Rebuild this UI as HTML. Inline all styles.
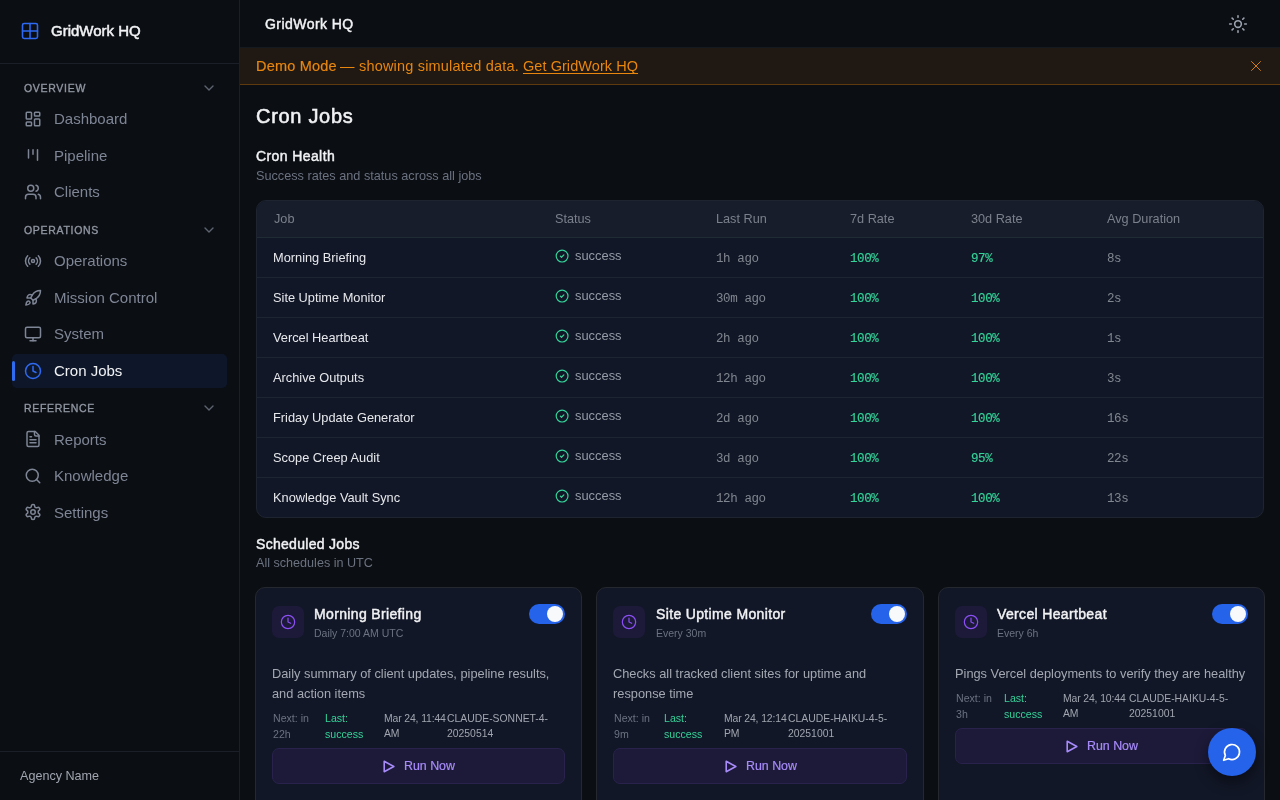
<!DOCTYPE html>
<html><head><meta charset="utf-8">
<style>
*{box-sizing:border-box;margin:0;padding:0}
html,body{width:1280px;height:800px;overflow:hidden;background:#0b0e13;font-family:"Liberation Sans",sans-serif}
.b{position:absolute}
.t{position:absolute;line-height:1;white-space:nowrap;will-change:transform}
</style></head><body>
<div class="b" style="left:239px;top:0;width:1px;height:800px;background:#1b1f27"></div>
<div class="b" style="left:0;top:63px;width:239px;height:1px;background:#1b1f27"></div>
<div class="b" style="left:0;top:751px;width:239px;height:1px;background:#1b1f27"></div>
<svg class="b" style="left:20px;top:21px" width="20" height="20" viewBox="0 0 24 24" fill="none" stroke="#2d69f2" stroke-width="1.9" stroke-linecap="round" stroke-linejoin="round"><rect x="3" y="3" width="18" height="18" rx="2"/><path d="M12 3v18"/><path d="M3 12h18"/></svg>
<div class="t" style="left:50.50px;top:22.90px;font-size:15px;color:#f1f2f4;letter-spacing:0.0px;-webkit-text-stroke:0.5px #f1f2f4;">GridWork HQ</div>
<div class="t" style="left:24.20px;top:82.51px;font-size:10.5px;color:#9096a1;letter-spacing:0.7px;-webkit-text-stroke:0.35px #9096a1;">OVERVIEW</div>
<svg class="b" style="left:204px;top:84.7px" width="10" height="6" viewBox="0 0 10 6" fill="none" stroke="#5d6370" stroke-width="1.4" stroke-linecap="round" stroke-linejoin="round"><path d="M1 1l4 4 4-4"/></svg>
<div class="t" style="left:24.20px;top:224.81px;font-size:10.5px;color:#9096a1;letter-spacing:0.7px;-webkit-text-stroke:0.35px #9096a1;">OPERATIONS</div>
<svg class="b" style="left:204px;top:227px" width="10" height="6" viewBox="0 0 10 6" fill="none" stroke="#5d6370" stroke-width="1.4" stroke-linecap="round" stroke-linejoin="round"><path d="M1 1l4 4 4-4"/></svg>
<div class="t" style="left:24.20px;top:402.81px;font-size:10.5px;color:#9096a1;letter-spacing:0.7px;-webkit-text-stroke:0.35px #9096a1;">REFERENCE</div>
<svg class="b" style="left:204px;top:405px" width="10" height="6" viewBox="0 0 10 6" fill="none" stroke="#5d6370" stroke-width="1.4" stroke-linecap="round" stroke-linejoin="round"><path d="M1 1l4 4 4-4"/></svg>
<svg class="b" style="left:24px;top:109.8px" width="18" height="18" viewBox="0 0 24 24" fill="none" stroke="#7e8595" stroke-width="2" stroke-linecap="round" stroke-linejoin="round"><rect x="3" y="3" width="7" height="9" rx="1"/><rect x="14" y="3" width="7" height="5" rx="1"/><rect x="14" y="12" width="7" height="9" rx="1"/><rect x="3" y="16" width="7" height="5" rx="1"/></svg>
<div class="t" style="left:54.40px;top:111.40px;font-size:15px;color:#7e8595;">Dashboard</div>
<svg class="b" style="left:24px;top:146.3px" width="18" height="18" viewBox="0 0 24 24" fill="none" stroke="#7e8595" stroke-width="2" stroke-linecap="round" stroke-linejoin="round"><path d="M6 5v11"/><path d="M12 5v6"/><path d="M18 5v14"/></svg>
<div class="t" style="left:54.40px;top:147.90px;font-size:15px;color:#7e8595;">Pipeline</div>
<svg class="b" style="left:24px;top:182.8px" width="18" height="18" viewBox="0 0 24 24" fill="none" stroke="#7e8595" stroke-width="2" stroke-linecap="round" stroke-linejoin="round"><path d="M16 21v-2a4 4 0 0 0-4-4H6a4 4 0 0 0-4 4v2"/><circle cx="9" cy="7" r="4"/><path d="M22 21v-2a4 4 0 0 0-3-3.87"/><path d="M16 3.13a4 4 0 0 1 0 7.75"/></svg>
<div class="t" style="left:54.40px;top:184.40px;font-size:15px;color:#7e8595;">Clients</div>
<svg class="b" style="left:24px;top:251.7px" width="18" height="18" viewBox="0 0 24 24" fill="none" stroke="#7e8595" stroke-width="2" stroke-linecap="round" stroke-linejoin="round"><path d="M4.9 19.1C1 15.2 1 8.8 4.9 4.9"/><path d="M7.8 16.2c-2.3-2.3-2.3-6.1 0-8.5"/><circle cx="12" cy="12" r="2"/><path d="M16.2 7.8c2.3 2.3 2.3 6.1 0 8.5"/><path d="M19.1 4.9C23 8.8 23 15.1 19.1 19"/></svg>
<div class="t" style="left:54.40px;top:253.30px;font-size:15px;color:#7e8595;">Operations</div>
<svg class="b" style="left:24px;top:288.8px" width="18" height="18" viewBox="0 0 24 24" fill="none" stroke="#7e8595" stroke-width="2" stroke-linecap="round" stroke-linejoin="round"><path d="M4.5 16.5c-1.5 1.26-2 5-2 5s3.74-.5 5-2c.71-.84.7-2.13-.09-2.91a2.18 2.18 0 0 0-2.91-.09z"/><path d="m12 15-3-3a22 22 0 0 1 2-3.95A12.88 12.88 0 0 1 22 2c0 2.72-.78 7.5-6 11a22.35 22.35 0 0 1-4 2z"/><path d="M9 12H4s.55-3.03 2-4c1.62-1.08 5 0 5 0"/><path d="M12 15v5s3.03-.55 4-2c1.08-1.62 0-5 0-5"/></svg>
<div class="t" style="left:54.40px;top:290.40px;font-size:15px;color:#7e8595;">Mission Control</div>
<svg class="b" style="left:24px;top:324.7px" width="18" height="18" viewBox="0 0 24 24" fill="none" stroke="#7e8595" stroke-width="2" stroke-linecap="round" stroke-linejoin="round"><rect x="2" y="3" width="20" height="14" rx="2"/><line x1="8" y1="21" x2="16" y2="21"/><line x1="12" y1="17" x2="12" y2="21"/></svg>
<div class="t" style="left:54.40px;top:326.30px;font-size:15px;color:#7e8595;">System</div>
<div class="b" style="left:12px;top:354px;width:215px;height:33.8px;border-radius:5px;background:#0e172a"></div>
<div class="b" style="left:12px;top:361px;width:3px;height:20px;background:#2f6bf0;border-radius:1.5px"></div>
<svg class="b" style="left:24px;top:361.8px" width="18" height="18" viewBox="0 0 24 24" fill="none" stroke="#2f69f0" stroke-width="2" stroke-linecap="round" stroke-linejoin="round"><circle cx="12" cy="12" r="10"/><polyline points="12 6 12 12 16 14"/></svg>
<div class="t" style="left:54.40px;top:363.40px;font-size:15px;color:#f1f2f4;">Cron Jobs</div>
<svg class="b" style="left:24px;top:430.2px" width="18" height="18" viewBox="0 0 24 24" fill="none" stroke="#7e8595" stroke-width="2" stroke-linecap="round" stroke-linejoin="round"><path d="M15 2H6a2 2 0 0 0-2 2v16a2 2 0 0 0 2 2h12a2 2 0 0 0 2-2V7Z"/><path d="M14 2v4a2 2 0 0 0 2 2h4"/><path d="M10 9H8"/><path d="M16 13H8"/><path d="M16 17H8"/></svg>
<div class="t" style="left:54.40px;top:431.80px;font-size:15px;color:#7e8595;">Reports</div>
<svg class="b" style="left:24px;top:466.5px" width="18" height="18" viewBox="0 0 24 24" fill="none" stroke="#7e8595" stroke-width="2" stroke-linecap="round" stroke-linejoin="round"><circle cx="11" cy="11" r="8"/><path d="m21 21-4.3-4.3"/></svg>
<div class="t" style="left:54.40px;top:468.10px;font-size:15px;color:#7e8595;">Knowledge</div>
<svg class="b" style="left:24px;top:503.3px" width="18" height="18" viewBox="0 0 24 24" fill="none" stroke="#7e8595" stroke-width="2" stroke-linecap="round" stroke-linejoin="round"><path d="M12.22 2h-.44a2 2 0 0 0-2 2v.18a2 2 0 0 1-1 1.73l-.43.25a2 2 0 0 1-2 0l-.15-.08a2 2 0 0 0-2.73.73l-.22.38a2 2 0 0 0 .73 2.73l.15.1a2 2 0 0 1 1 1.72v.51a2 2 0 0 1-1 1.74l-.15.09a2 2 0 0 0-.73 2.73l.22.38a2 2 0 0 0 2.73.73l.15-.08a2 2 0 0 1 2 0l.43.25a2 2 0 0 1 1 1.73V20a2 2 0 0 0 2 2h.44a2 2 0 0 0 2-2v-.18a2 2 0 0 1 1-1.73l.43-.25a2 2 0 0 1 2 0l.15.08a2 2 0 0 0 2.73-.73l.22-.39a2 2 0 0 0-.73-2.73l-.15-.08a2 2 0 0 1-1-1.74v-.5a2 2 0 0 1 1-1.74l.15-.09a2 2 0 0 0 .73-2.73l-.22-.38a2 2 0 0 0-2.73-.73l-.15.08a2 2 0 0 1-2 0l-.43-.25a2 2 0 0 1-1-1.73V4a2 2 0 0 0-2-2z"/><circle cx="12" cy="12" r="3"/></svg>
<div class="t" style="left:54.40px;top:504.90px;font-size:15px;color:#7e8595;">Settings</div>
<div class="t" style="left:20.10px;top:769.93px;font-size:12.6px;color:#a0a5af;">Agency Name</div>
<div class="b" style="left:240px;top:47px;width:1040px;height:1px;background:#151920"></div>
<div class="t" style="left:264.60px;top:16.85px;font-size:14px;color:#f1f2f4;letter-spacing:0.45px;-webkit-text-stroke:0.45px #f1f2f4;">GridWork HQ</div>
<svg class="b" style="left:1228px;top:14px" width="20" height="20" viewBox="0 0 24 24" fill="none" stroke="#9ca3af" stroke-width="1.9" stroke-linecap="round"><circle cx="12" cy="12" r="4"/><path d="M12 2v2"/><path d="M12 20v2"/><path d="m4.93 4.93 1.41 1.41"/><path d="m17.66 17.66 1.41 1.41"/><path d="M2 12h2"/><path d="M20 12h2"/><path d="m6.34 17.66-1.41 1.41"/><path d="m19.07 4.93-1.41 1.41"/></svg>
<div class="b" style="left:240px;top:48px;width:1040px;height:36px;background:#1f1813"></div>
<div class="b" style="left:240px;top:84px;width:1040px;height:1px;background:#5e3a0e"></div>
<div class="t" style="left:255.60px;top:58.83px;font-size:14.5px;color:#e8860e;letter-spacing:0.2px;-webkit-text-stroke:0.2px #e8860e;">Demo Mode</div>
<div class="t" style="left:340.30px;top:58.83px;font-size:14.5px;color:#e8860e;letter-spacing:0px;">—</div>
<div class="t" style="left:359.20px;top:58.83px;font-size:14.5px;color:#e8860e;letter-spacing:0.19px;">showing simulated data.</div>
<div class="t" style="left:523.40px;top:58.83px;font-size:14.5px;color:#e8860e;letter-spacing:0.06px;text-decoration:underline;text-underline-offset:2px;text-decoration-skip-ink:none;">Get GridWork HQ</div>
<svg class="b" style="left:1251px;top:61px" width="10" height="10" viewBox="0 0 10 10" fill="none" stroke="#d27d10" stroke-width="1.0" stroke-linecap="round"><path d="M0.5 0.5l9 9M9.5 0.5l-9 9"/></svg>
<div class="t" style="left:256.30px;top:106.07px;font-size:20px;color:#f1f2f4;letter-spacing:0.7px;-webkit-text-stroke:0.55px #f1f2f4;">Cron Jobs</div>
<div class="t" style="left:256.30px;top:149.35px;font-size:14px;color:#f1f2f4;letter-spacing:0.4px;-webkit-text-stroke:0.45px #f1f2f4;">Cron Health</div>
<div class="t" style="left:256.30px;top:169.65px;font-size:12.7px;color:#6b7280;">Success rates and status across all jobs</div>
<div class="b" style="left:256px;top:200px;width:1008px;height:318px;border:1px solid #1e2430;border-radius:10px;background:#121727;overflow:hidden"><div class="b" style="left:0;top:0;width:1006px;height:37px;background:#181d2b"></div></div>
<div class="b" style="left:257px;top:237px;width:1006px;height:1px;background:#202c33"></div>
<div class="b" style="left:257px;top:277px;width:1006px;height:1px;background:#1e2532"></div>
<div class="b" style="left:257px;top:317px;width:1006px;height:1px;background:#1e2532"></div>
<div class="b" style="left:257px;top:357px;width:1006px;height:1px;background:#1e2532"></div>
<div class="b" style="left:257px;top:397px;width:1006px;height:1px;background:#1e2532"></div>
<div class="b" style="left:257px;top:437px;width:1006px;height:1px;background:#1e2532"></div>
<div class="b" style="left:257px;top:477px;width:1006px;height:1px;background:#1e2532"></div>
<div class="t" style="left:273.50px;top:213.25px;font-size:12.7px;color:#7b818c;">Job</div>
<div class="t" style="left:554.75px;top:213.25px;font-size:12.7px;color:#7b818c;">Status</div>
<div class="t" style="left:716.00px;top:213.25px;font-size:12.7px;color:#7b818c;">Last Run</div>
<div class="t" style="left:850.00px;top:213.25px;font-size:12.7px;color:#7b818c;">7d Rate</div>
<div class="t" style="left:971.00px;top:213.25px;font-size:12.7px;color:#7b818c;">30d Rate</div>
<div class="t" style="left:1107.00px;top:213.25px;font-size:12.7px;color:#7b818c;">Avg Duration</div>
<div class="t" style="left:272.70px;top:251.86px;font-size:12.8px;color:#e6e8ec;">Morning Briefing</div>
<svg class="b" style="left:554.65px;top:248.90px" width="14.2" height="14.2" viewBox="0 0 24 24" fill="none" stroke="#34d399" stroke-width="2" stroke-linecap="round" stroke-linejoin="round"><circle cx="12" cy="12" r="10"/><path d="m9 12 2 2 4-4"/></svg>
<div class="t" style="left:574.75px;top:249.78px;font-size:12.9px;color:#959ba6;">success</div>
<div class="t" style="left:716.00px;top:253.12px;font-size:12.5px;color:#80868f;letter-spacing:-0.4px;font-family:'Liberation Mono',monospace;">1h ago</div>
<div class="t" style="left:850.00px;top:253.12px;font-size:12.5px;color:#34d399;letter-spacing:-0.4px;font-family:'Liberation Mono',monospace;-webkit-text-stroke:0.15px #34d399;">100%</div>
<div class="t" style="left:971.00px;top:253.12px;font-size:12.5px;color:#34d399;letter-spacing:-0.4px;font-family:'Liberation Mono',monospace;-webkit-text-stroke:0.15px #34d399;">97%</div>
<div class="t" style="left:1107.00px;top:253.12px;font-size:12.5px;color:#80868f;letter-spacing:-0.4px;font-family:'Liberation Mono',monospace;">8s</div>
<div class="t" style="left:272.70px;top:291.86px;font-size:12.8px;color:#e6e8ec;">Site Uptime Monitor</div>
<svg class="b" style="left:554.65px;top:288.90px" width="14.2" height="14.2" viewBox="0 0 24 24" fill="none" stroke="#34d399" stroke-width="2" stroke-linecap="round" stroke-linejoin="round"><circle cx="12" cy="12" r="10"/><path d="m9 12 2 2 4-4"/></svg>
<div class="t" style="left:574.75px;top:289.78px;font-size:12.9px;color:#959ba6;">success</div>
<div class="t" style="left:716.00px;top:293.12px;font-size:12.5px;color:#80868f;letter-spacing:-0.4px;font-family:'Liberation Mono',monospace;">30m ago</div>
<div class="t" style="left:850.00px;top:293.12px;font-size:12.5px;color:#34d399;letter-spacing:-0.4px;font-family:'Liberation Mono',monospace;-webkit-text-stroke:0.15px #34d399;">100%</div>
<div class="t" style="left:971.00px;top:293.12px;font-size:12.5px;color:#34d399;letter-spacing:-0.4px;font-family:'Liberation Mono',monospace;-webkit-text-stroke:0.15px #34d399;">100%</div>
<div class="t" style="left:1107.00px;top:293.12px;font-size:12.5px;color:#80868f;letter-spacing:-0.4px;font-family:'Liberation Mono',monospace;">2s</div>
<div class="t" style="left:272.70px;top:331.86px;font-size:12.8px;color:#e6e8ec;">Vercel Heartbeat</div>
<svg class="b" style="left:554.65px;top:328.90px" width="14.2" height="14.2" viewBox="0 0 24 24" fill="none" stroke="#34d399" stroke-width="2" stroke-linecap="round" stroke-linejoin="round"><circle cx="12" cy="12" r="10"/><path d="m9 12 2 2 4-4"/></svg>
<div class="t" style="left:574.75px;top:329.78px;font-size:12.9px;color:#959ba6;">success</div>
<div class="t" style="left:716.00px;top:333.12px;font-size:12.5px;color:#80868f;letter-spacing:-0.4px;font-family:'Liberation Mono',monospace;">2h ago</div>
<div class="t" style="left:850.00px;top:333.12px;font-size:12.5px;color:#34d399;letter-spacing:-0.4px;font-family:'Liberation Mono',monospace;-webkit-text-stroke:0.15px #34d399;">100%</div>
<div class="t" style="left:971.00px;top:333.12px;font-size:12.5px;color:#34d399;letter-spacing:-0.4px;font-family:'Liberation Mono',monospace;-webkit-text-stroke:0.15px #34d399;">100%</div>
<div class="t" style="left:1107.00px;top:333.12px;font-size:12.5px;color:#80868f;letter-spacing:-0.4px;font-family:'Liberation Mono',monospace;">1s</div>
<div class="t" style="left:272.70px;top:371.86px;font-size:12.8px;color:#e6e8ec;">Archive Outputs</div>
<svg class="b" style="left:554.65px;top:368.90px" width="14.2" height="14.2" viewBox="0 0 24 24" fill="none" stroke="#34d399" stroke-width="2" stroke-linecap="round" stroke-linejoin="round"><circle cx="12" cy="12" r="10"/><path d="m9 12 2 2 4-4"/></svg>
<div class="t" style="left:574.75px;top:369.78px;font-size:12.9px;color:#959ba6;">success</div>
<div class="t" style="left:716.00px;top:373.12px;font-size:12.5px;color:#80868f;letter-spacing:-0.4px;font-family:'Liberation Mono',monospace;">12h ago</div>
<div class="t" style="left:850.00px;top:373.12px;font-size:12.5px;color:#34d399;letter-spacing:-0.4px;font-family:'Liberation Mono',monospace;-webkit-text-stroke:0.15px #34d399;">100%</div>
<div class="t" style="left:971.00px;top:373.12px;font-size:12.5px;color:#34d399;letter-spacing:-0.4px;font-family:'Liberation Mono',monospace;-webkit-text-stroke:0.15px #34d399;">100%</div>
<div class="t" style="left:1107.00px;top:373.12px;font-size:12.5px;color:#80868f;letter-spacing:-0.4px;font-family:'Liberation Mono',monospace;">3s</div>
<div class="t" style="left:272.70px;top:411.86px;font-size:12.8px;color:#e6e8ec;">Friday Update Generator</div>
<svg class="b" style="left:554.65px;top:408.90px" width="14.2" height="14.2" viewBox="0 0 24 24" fill="none" stroke="#34d399" stroke-width="2" stroke-linecap="round" stroke-linejoin="round"><circle cx="12" cy="12" r="10"/><path d="m9 12 2 2 4-4"/></svg>
<div class="t" style="left:574.75px;top:409.78px;font-size:12.9px;color:#959ba6;">success</div>
<div class="t" style="left:716.00px;top:413.12px;font-size:12.5px;color:#80868f;letter-spacing:-0.4px;font-family:'Liberation Mono',monospace;">2d ago</div>
<div class="t" style="left:850.00px;top:413.12px;font-size:12.5px;color:#34d399;letter-spacing:-0.4px;font-family:'Liberation Mono',monospace;-webkit-text-stroke:0.15px #34d399;">100%</div>
<div class="t" style="left:971.00px;top:413.12px;font-size:12.5px;color:#34d399;letter-spacing:-0.4px;font-family:'Liberation Mono',monospace;-webkit-text-stroke:0.15px #34d399;">100%</div>
<div class="t" style="left:1107.00px;top:413.12px;font-size:12.5px;color:#80868f;letter-spacing:-0.4px;font-family:'Liberation Mono',monospace;">16s</div>
<div class="t" style="left:272.70px;top:451.86px;font-size:12.8px;color:#e6e8ec;">Scope Creep Audit</div>
<svg class="b" style="left:554.65px;top:448.90px" width="14.2" height="14.2" viewBox="0 0 24 24" fill="none" stroke="#34d399" stroke-width="2" stroke-linecap="round" stroke-linejoin="round"><circle cx="12" cy="12" r="10"/><path d="m9 12 2 2 4-4"/></svg>
<div class="t" style="left:574.75px;top:449.78px;font-size:12.9px;color:#959ba6;">success</div>
<div class="t" style="left:716.00px;top:453.12px;font-size:12.5px;color:#80868f;letter-spacing:-0.4px;font-family:'Liberation Mono',monospace;">3d ago</div>
<div class="t" style="left:850.00px;top:453.12px;font-size:12.5px;color:#34d399;letter-spacing:-0.4px;font-family:'Liberation Mono',monospace;-webkit-text-stroke:0.15px #34d399;">100%</div>
<div class="t" style="left:971.00px;top:453.12px;font-size:12.5px;color:#34d399;letter-spacing:-0.4px;font-family:'Liberation Mono',monospace;-webkit-text-stroke:0.15px #34d399;">95%</div>
<div class="t" style="left:1107.00px;top:453.12px;font-size:12.5px;color:#80868f;letter-spacing:-0.4px;font-family:'Liberation Mono',monospace;">22s</div>
<div class="t" style="left:272.70px;top:491.86px;font-size:12.8px;color:#e6e8ec;">Knowledge Vault Sync</div>
<svg class="b" style="left:554.65px;top:488.90px" width="14.2" height="14.2" viewBox="0 0 24 24" fill="none" stroke="#34d399" stroke-width="2" stroke-linecap="round" stroke-linejoin="round"><circle cx="12" cy="12" r="10"/><path d="m9 12 2 2 4-4"/></svg>
<div class="t" style="left:574.75px;top:489.78px;font-size:12.9px;color:#959ba6;">success</div>
<div class="t" style="left:716.00px;top:493.12px;font-size:12.5px;color:#80868f;letter-spacing:-0.4px;font-family:'Liberation Mono',monospace;">12h ago</div>
<div class="t" style="left:850.00px;top:493.12px;font-size:12.5px;color:#34d399;letter-spacing:-0.4px;font-family:'Liberation Mono',monospace;-webkit-text-stroke:0.15px #34d399;">100%</div>
<div class="t" style="left:971.00px;top:493.12px;font-size:12.5px;color:#34d399;letter-spacing:-0.4px;font-family:'Liberation Mono',monospace;-webkit-text-stroke:0.15px #34d399;">100%</div>
<div class="t" style="left:1107.00px;top:493.12px;font-size:12.5px;color:#80868f;letter-spacing:-0.4px;font-family:'Liberation Mono',monospace;">13s</div>
<div class="t" style="left:256.25px;top:537.15px;font-size:14px;color:#f1f2f4;letter-spacing:0.3px;-webkit-text-stroke:0.45px #f1f2f4;">Scheduled Jobs</div>
<div class="t" style="left:256.25px;top:557.08px;font-size:12.6px;color:#6b7280;">All schedules in UTC</div>
<div class="b" style="left:255px;top:587px;width:327px;height:240px;border:1px solid #25282f;border-radius:10px;background:#121727"></div>
<div class="b" style="left:272.30px;top:606px;width:32px;height:32px;border-radius:7px;background:#1c1a38"><svg class="b" style="left:8px;top:8px" width="16" height="16" viewBox="0 0 24 24" fill="none" stroke="#8c4ff5" stroke-width="1.8" stroke-linecap="round" stroke-linejoin="round"><circle cx="12" cy="12" r="10"/><polyline points="12 6 12 12 16 14"/></svg></div>
<div class="t" style="left:314.40px;top:606.90px;font-size:14px;color:#f1f2f4;letter-spacing:0.35px;-webkit-text-stroke:0.45px #f1f2f4;">Morning Briefing</div>
<div class="t" style="left:314.40px;top:628.01px;font-size:10.5px;color:#6b7280;">Daily 7:00 AM UTC</div>
<div class="b" style="left:529.00px;top:604px;width:36px;height:20px;border-radius:10px;background:#2563eb"><div class="b" style="left:18px;top:2px;width:16px;height:16px;border-radius:8px;background:#f8f9fb"></div></div>
<div class="t" style="left:271.60px;top:668.16px;font-size:12.8px;color:#a3a8b2;">Daily summary of client updates, pipeline results,</div>
<div class="t" style="left:271.60px;top:688.16px;font-size:12.8px;color:#a3a8b2;">and action items</div>
<div class="t" style="left:272.60px;top:713.43px;font-size:10.6px;color:#6b7280;">Next: in</div>
<div class="t" style="left:324.50px;top:713.43px;font-size:10.6px;color:#34d399;">Last:</div>
<div class="t" style="left:383.90px;top:713.60px;font-size:10.4px;color:#a0a5af;letter-spacing:-0.12px;">Mar 24, 11:44</div>
<div class="t" style="left:447.30px;top:713.60px;font-size:10.4px;color:#a0a5af;">CLAUDE-SONNET-4-</div>
<div class="t" style="left:272.60px;top:728.53px;font-size:10.6px;color:#6b7280;">22h</div>
<div class="t" style="left:324.50px;top:728.53px;font-size:10.6px;color:#34d399;">success</div>
<div class="t" style="left:383.90px;top:728.70px;font-size:10.4px;color:#a0a5af;letter-spacing:-0.12px;">AM</div>
<div class="t" style="left:447.30px;top:728.70px;font-size:10.4px;color:#a0a5af;">20250514</div>
<div class="b" style="left:272.30px;top:748px;width:292.70px;height:36px;border-radius:7px;background:#1c1a38;border:1px solid #29224d"></div>
<div class="b" style="left:383.15px;top:759.70px;width:12px;height:13px"><svg class="b" style="left:0;top:0" width="12" height="13" viewBox="0 0 12 13" fill="none" stroke="#a78bfa" stroke-width="1.6" stroke-linejoin="round"><path d="M1.2 1.3 L10.8 6.5 L1.2 11.7 Z"/></svg></div>
<div class="t" style="left:404.05px;top:759.80px;font-size:12.4px;color:#a78bfa;-webkit-text-stroke:0.2px #a78bfa;">Run Now</div>
<div class="b" style="left:596px;top:587px;width:328px;height:240px;border:1px solid #25282f;border-radius:10px;background:#121727"></div>
<div class="b" style="left:613.30px;top:606px;width:32px;height:32px;border-radius:7px;background:#1c1a38"><svg class="b" style="left:8px;top:8px" width="16" height="16" viewBox="0 0 24 24" fill="none" stroke="#8c4ff5" stroke-width="1.8" stroke-linecap="round" stroke-linejoin="round"><circle cx="12" cy="12" r="10"/><polyline points="12 6 12 12 16 14"/></svg></div>
<div class="t" style="left:655.80px;top:606.90px;font-size:14px;color:#f1f2f4;letter-spacing:0.35px;-webkit-text-stroke:0.45px #f1f2f4;">Site Uptime Monitor</div>
<div class="t" style="left:655.80px;top:628.01px;font-size:10.5px;color:#6b7280;">Every 30m</div>
<div class="b" style="left:871.00px;top:604px;width:36px;height:20px;border-radius:10px;background:#2563eb"><div class="b" style="left:18px;top:2px;width:16px;height:16px;border-radius:8px;background:#f8f9fb"></div></div>
<div class="t" style="left:612.60px;top:668.16px;font-size:12.8px;color:#a3a8b2;">Checks all tracked client sites for uptime and</div>
<div class="t" style="left:612.60px;top:688.16px;font-size:12.8px;color:#a3a8b2;">response time</div>
<div class="t" style="left:613.60px;top:713.43px;font-size:10.6px;color:#6b7280;">Next: in</div>
<div class="t" style="left:664.40px;top:713.43px;font-size:10.6px;color:#34d399;">Last:</div>
<div class="t" style="left:723.60px;top:713.60px;font-size:10.4px;color:#a0a5af;letter-spacing:-0.12px;">Mar 24, 12:14</div>
<div class="t" style="left:787.60px;top:713.60px;font-size:10.4px;color:#a0a5af;">CLAUDE-HAIKU-4-5-</div>
<div class="t" style="left:613.60px;top:728.53px;font-size:10.6px;color:#6b7280;">9m</div>
<div class="t" style="left:664.40px;top:728.53px;font-size:10.6px;color:#34d399;">success</div>
<div class="t" style="left:723.60px;top:728.70px;font-size:10.4px;color:#a0a5af;letter-spacing:-0.12px;">PM</div>
<div class="t" style="left:787.60px;top:728.70px;font-size:10.4px;color:#a0a5af;">20251001</div>
<div class="b" style="left:613.30px;top:748px;width:293.70px;height:36px;border-radius:7px;background:#1c1a38;border:1px solid #29224d"></div>
<div class="b" style="left:724.65px;top:759.70px;width:12px;height:13px"><svg class="b" style="left:0;top:0" width="12" height="13" viewBox="0 0 12 13" fill="none" stroke="#a78bfa" stroke-width="1.6" stroke-linejoin="round"><path d="M1.2 1.3 L10.8 6.5 L1.2 11.7 Z"/></svg></div>
<div class="t" style="left:745.55px;top:759.80px;font-size:12.4px;color:#a78bfa;-webkit-text-stroke:0.2px #a78bfa;">Run Now</div>
<div class="b" style="left:938px;top:587px;width:327px;height:240px;border:1px solid #25282f;border-radius:10px;background:#121727"></div>
<div class="b" style="left:955.30px;top:606px;width:32px;height:32px;border-radius:7px;background:#1c1a38"><svg class="b" style="left:8px;top:8px" width="16" height="16" viewBox="0 0 24 24" fill="none" stroke="#8c4ff5" stroke-width="1.8" stroke-linecap="round" stroke-linejoin="round"><circle cx="12" cy="12" r="10"/><polyline points="12 6 12 12 16 14"/></svg></div>
<div class="t" style="left:997.40px;top:606.90px;font-size:14px;color:#f1f2f4;letter-spacing:0.35px;-webkit-text-stroke:0.45px #f1f2f4;">Vercel Heartbeat</div>
<div class="t" style="left:997.40px;top:628.01px;font-size:10.5px;color:#6b7280;">Every 6h</div>
<div class="b" style="left:1212.00px;top:604px;width:36px;height:20px;border-radius:10px;background:#2563eb"><div class="b" style="left:18px;top:2px;width:16px;height:16px;border-radius:8px;background:#f8f9fb"></div></div>
<div class="t" style="left:954.60px;top:668.16px;font-size:12.8px;color:#a3a8b2;">Pings Vercel deployments to verify they are healthy</div>
<div class="t" style="left:955.60px;top:693.43px;font-size:10.6px;color:#6b7280;">Next: in</div>
<div class="t" style="left:1003.50px;top:693.43px;font-size:10.6px;color:#34d399;">Last:</div>
<div class="t" style="left:1062.60px;top:693.60px;font-size:10.4px;color:#a0a5af;letter-spacing:-0.12px;">Mar 24, 10:44</div>
<div class="t" style="left:1129.40px;top:693.60px;font-size:10.4px;color:#a0a5af;">CLAUDE-HAIKU-4-5-</div>
<div class="t" style="left:955.60px;top:708.53px;font-size:10.6px;color:#6b7280;">3h</div>
<div class="t" style="left:1003.50px;top:708.53px;font-size:10.6px;color:#34d399;">success</div>
<div class="t" style="left:1062.60px;top:708.70px;font-size:10.4px;color:#a0a5af;letter-spacing:-0.12px;">AM</div>
<div class="t" style="left:1129.40px;top:708.70px;font-size:10.4px;color:#a0a5af;">20251001</div>
<div class="b" style="left:955.30px;top:728px;width:292.70px;height:36px;border-radius:7px;background:#1c1a38;border:1px solid #29224d"></div>
<div class="b" style="left:1066.15px;top:739.70px;width:12px;height:13px"><svg class="b" style="left:0;top:0" width="12" height="13" viewBox="0 0 12 13" fill="none" stroke="#a78bfa" stroke-width="1.6" stroke-linejoin="round"><path d="M1.2 1.3 L10.8 6.5 L1.2 11.7 Z"/></svg></div>
<div class="t" style="left:1087.05px;top:739.80px;font-size:12.4px;color:#a78bfa;-webkit-text-stroke:0.2px #a78bfa;">Run Now</div>
<div class="b" style="left:1208px;top:728px;width:48px;height:48px;border-radius:24px;background:#2563eb;box-shadow:0 6px 14px rgba(0,0,0,0.45)"><svg class="b" style="left:14px;top:14px" width="20" height="20" viewBox="0 0 24 24" fill="none" stroke="#fff" stroke-width="2" stroke-linecap="round" stroke-linejoin="round"><path d="M7.9 20A9 9 0 1 0 4 16.1L2 22Z"/></svg></div>
</body></html>
